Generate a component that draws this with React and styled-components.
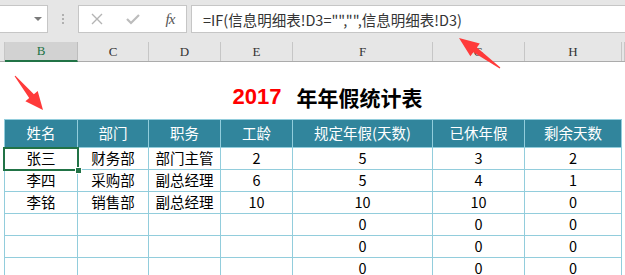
import React from "react";
import styled, { createGlobalStyle } from "styled-components";

const GlobalStyle = createGlobalStyle`
  html, body {
    margin: 0;
    padding: 0;
    background: #fff;
    overflow: hidden;
  }
  body {
    font-family: "Noto Sans CJK SC", "Noto Sans", sans-serif;
  }
`;

// 列宽(像素),和截图里的网格对齐
const COLUMNS = [
  { key: "B", width: 73 },
  { key: "C", width: 71 },
  { key: "D", width: 72 },
  { key: "E", width: 72 },
  { key: "F", width: 140 },
  { key: "G", width: 92 },
  { key: "H", width: 97 },
];

const GRID = COLUMNS.map((c) => `${c.width}px`).join(" ");

const HEADERS = ["姓名", "部门", "职务", "工龄", "规定年假(天数)", "已休年假", "剩余天数"];

const ROWS = [
  ["张三", "财务部", "部门主管", "2", "5", "3", "2"],
  ["李四", "采购部", "副总经理", "6", "5", "4", "1"],
  ["李铭", "销售部", "副总经理", "10", "10", "10", "0"],
  ["", "", "", "", "0", "0", "0"],
  ["", "", "", "", "0", "0", "0"],
  ["", "", "", "", "0", "0", "0"],
];

const App = () => {
  return (
    <Page>
      <GlobalStyle />
      <FormulaBar>
        <NameBox>
          <DropArrow />
        </NameBox>
        <Grip>
          <Dot />
          <Dot />
          <Dot />
        </Grip>
        <ButtonBox>
          <ToolIcon>
            <svg width="12" height="12" viewBox="0 0 12 12">
              <path d="M1 1 L11 11 M11 1 L1 11" stroke="#b4b4b4" strokeWidth="1.4" fill="none" />
            </svg>
          </ToolIcon>
          <ToolIcon>
            <svg width="14" height="12" viewBox="0 0 14 12">
              <path d="M1 6 L5 10 L13 2" stroke="#bcbcbc" strokeWidth="2.2" fill="none" />
            </svg>
          </ToolIcon>
          <ToolIcon>
            <Fx>fx</Fx>
          </ToolIcon>
        </ButtonBox>
        <FormulaBox>=IF(信息明细表!D3="","",信息明细表!D3)</FormulaBox>
      </FormulaBar>

      <ColumnHeaderRow>
        <Corner />
        {COLUMNS.map((c) => (
          <ColumnLetter key={c.key} selected={c.key === "B"}>
            {c.key}
          </ColumnLetter>
        ))}
        <Corner />
      </ColumnHeaderRow>

      <TitleRow>
        <TitleYear>2017</TitleYear>
        <TitleText>年年假统计表</TitleText>
      </TitleRow>

      <Table>
        {HEADERS.map((h) => (
          <HeadCell key={h}>{h}</HeadCell>
        ))}
        {ROWS.map((row, r) =>
          row.map((v, c) => (
            <Cell key={`${r}-${c}`} selected={r === 0 && c === 0}>
              {v}
            </Cell>
          ))
        )}
      </Table>

      {/* 截图上的两个红色箭头 */}
      <Overlay width="625" height="275" viewBox="0 0 625 275">
        <polygon
          points="43,110 25.4,101.2 29.2,98 14.6,76.3 15.4,75.7 33.9,94.2 37.7,91"
          fill="#ff3a3a"
        />
        <polygon
          points="459,38 479.8,43.4 476.9,47.4 500.35,67.5 499.65,68.5 473.3,52.2 470.4,56.3"
          fill="#ff3a3a"
        />
      </Overlay>
    </Page>
  );
};

export default App;

const Page = styled.div`
  position: relative;
  width: 625px;
  height: 275px;
  overflow: hidden;
  background: #fff;
`;

const FormulaBar = styled.div`
  display: flex;
  align-items: stretch;
  height: 28px;
  padding: 5px 0 9px;
  background: #e6e6e6;
`;

const NameBox = styled.div`
  position: relative;
  box-sizing: border-box;
  width: 48px;
  background: #fff;
  border: 1px solid #c6c6c6;
  border-left: none;
`;

const DropArrow = styled.div`
  position: absolute;
  left: 34px;
  top: 11px;
  width: 0;
  height: 0;
  border-left: 4px solid transparent;
  border-right: 4px solid transparent;
  border-top: 4px solid #7a7a7a;
`;

const Grip = styled.div`
  display: flex;
  flex-direction: column;
  align-items: center;
  justify-content: center;
  gap: 2px;
  width: 30px;
`;

const Dot = styled.div`
  width: 2px;
  height: 2px;
  background: #b0b0b0;
`;

const ButtonBox = styled.div`
  box-sizing: border-box;
  display: grid;
  grid-template-columns: repeat(3, 36px);
  width: 109px;
  background: #fff;
  border: 1px solid #c6c6c6;
`;

const ToolIcon = styled.div`
  display: flex;
  align-items: center;
  justify-content: center;
`;

const Fx = styled.span`
  font-family: "Liberation Serif", serif;
  font-style: italic;
  font-size: 15px;
  color: #555;
  letter-spacing: -1px;
  margin-left: 2px;
`;

const FormulaBox = styled.div`
  box-sizing: border-box;
  flex: 1;
  margin-left: 4px;
  padding-left: 11px;
  display: flex;
  align-items: center;
  background: #fff;
  border: 1px solid #c6c6c6;
  border-right: none;
  font-size: 14.5px;
  color: #333;
  white-space: nowrap;
`;

const ColumnHeaderRow = styled.div`
  display: grid;
  grid-template-columns: 5px ${GRID} 1fr;
  height: 19px;
  background: #e6e6e6;
  border-bottom: 1px solid #ababab;
`;

const Corner = styled.div`
  border-right: 1px solid #c6c6c6;
`;

const ColumnLetter = styled.div`
  box-sizing: border-box;
  display: flex;
  align-items: center;
  justify-content: center;
  font-family: "Liberation Serif", serif;
  font-size: 13px;
  color: ${(p) => (p.selected ? "#217346" : "#333")};
  background: ${(p) => (p.selected ? "#d2d2d2" : "transparent")};
  border-right: 1px solid ${(p) => (p.selected ? "#bdbdbd" : "#c6c6c6")};
  border-bottom: ${(p) => (p.selected ? "2px solid #217346" : "none")};
  margin-bottom: ${(p) => (p.selected ? "-1px" : "0")};
`;

const TitleRow = styled.div`
  box-sizing: border-box;
  height: 57px;
  display: flex;
  align-items: flex-end;
  justify-content: center;
  padding: 0 0 11px 30px;
  font-weight: bold;
`;

const TitleYear = styled.span`
  font-family: "Liberation Sans", Arial, sans-serif;
  font-size: 22px;
  line-height: 22px;
  color: #ff0000;
  margin-right: 15px;
`;

const TitleText = styled.span`
  font-family: "Noto Sans CJK SC", sans-serif;
  font-size: 21px;
  line-height: 22px;
  color: #000;
`;

const Table = styled.div`
  display: grid;
  grid-template-columns: ${GRID};
  grid-template-rows: 28px;
  grid-auto-rows: 22px;
  width: max-content;
  margin-left: 4px;
  border-top: 1px solid #92cddc;
  border-left: 1px solid #92cddc;
`;

const HeadCell = styled.div`
  box-sizing: border-box;
  display: flex;
  align-items: center;
  justify-content: center;
  background: #31859c;
  color: #fff;
  font-size: 14.5px;
  line-height: 1;
  border-right: 1px solid #92cddc;
  border-bottom: 1px solid #92cddc;
  white-space: nowrap;
`;

const Cell = styled.div`
  position: relative;
  box-sizing: border-box;
  display: flex;
  align-items: center;
  justify-content: center;
  color: #000;
  font-size: 14.5px;
  line-height: 1;
  border-right: 1px solid #92cddc;
  border-bottom: 1px solid #92cddc;
  white-space: nowrap;

  ${(p) =>
    p.selected &&
    `
    &::after {
      content: "";
      position: absolute;
      left: -2px;
      top: -1px;
      right: -2px;
      bottom: -2px;
      border: 2px solid #217346;
    }
    &::before {
      content: "";
      position: absolute;
      right: -5px;
      bottom: -5px;
      width: 5px;
      height: 5px;
      background: #217346;
      border: 1px solid #fff;
      z-index: 1;
    }
  `}
`;

const Overlay = styled.svg`
  position: absolute;
  left: 0;
  top: 0;
  pointer-events: none;
`;
